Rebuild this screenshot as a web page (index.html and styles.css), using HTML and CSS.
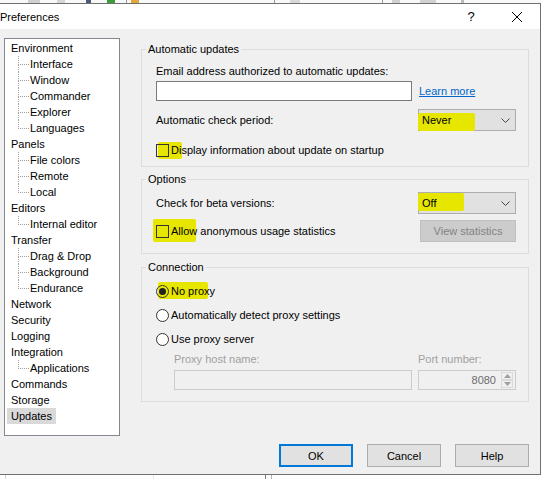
FILE: index.html
```html
<!DOCTYPE html>
<html lang="en">
<head>
    <meta charset="UTF-8">
    <title>Preferences</title>
    <link rel="stylesheet" href="styles.css">
</head>
<body>
<div class="screen">
    <div class="backdrop-top"></div>

    <div class="dialog">
        <div class="titlebar">
            <span class="title">Preferences</span>
            <span class="caption-btn help">?</span>
            <span class="caption-btn">
                <svg width="10" height="10" viewBox="0 0 10 10"><path d="M0 0 L10 10 M10 0 L0 10" stroke="#000" stroke-width="1" fill="none"/></svg>
            </span>
        </div>

        <div class="dialog-body">
            <ul class="tree">
                <li><span class="node">Environment</span>
                    <ul>
                        <li><span class="node">Interface</span></li>
                        <li><span class="node">Window</span></li>
                        <li><span class="node">Commander</span></li>
                        <li><span class="node">Explorer</span></li>
                        <li><span class="node">Languages</span></li>
                    </ul>
                </li>
                <li><span class="node">Panels</span>
                    <ul>
                        <li><span class="node">File colors</span></li>
                        <li><span class="node">Remote</span></li>
                        <li><span class="node">Local</span></li>
                    </ul>
                </li>
                <li><span class="node">Editors</span>
                    <ul>
                        <li><span class="node">Internal editor</span></li>
                    </ul>
                </li>
                <li><span class="node">Transfer</span>
                    <ul>
                        <li><span class="node">Drag &amp; Drop</span></li>
                        <li><span class="node">Background</span></li>
                        <li><span class="node">Endurance</span></li>
                    </ul>
                </li>
                <li><span class="node">Network</span></li>
                <li><span class="node">Security</span></li>
                <li><span class="node">Logging</span></li>
                <li><span class="node">Integration</span>
                    <ul>
                        <li><span class="node">Applications</span></li>
                    </ul>
                </li>
                <li><span class="node">Commands</span></li>
                <li><span class="node">Storage</span></li>
                <li><span class="node selected">Updates</span></li>
            </ul>

            <div class="page">
                <fieldset class="group group-updates">
                    <legend>Automatic updates</legend>
                    <div class="label-line">Email address authorized to automatic updates:</div>
                    <div class="email-row">
                        <input class="textbox email" type="text">
                        <a class="link" href="#">Learn more</a>
                    </div>
                    <div class="spread period-row">
                        <span>Automatic check period:</span>
                        <div class="select hl hl-never">
                            <span>Never</span>
                            <svg width="9" height="5" viewBox="0 0 9 5"><path d="M0.5 0.5 L4.5 4.5 L8.5 0.5" stroke="#444" fill="none"/></svg>
                        </div>
                    </div>
                    <label class="check display-row hl hl-display"><span class="box"></span>Display information about update on startup</label>
                </fieldset>

                <fieldset class="group group-options">
                    <legend>Options</legend>
                    <div class="spread beta-row">
                        <span>Check for beta versions:</span>
                        <div class="select hl hl-off">
                            <span>Off</span>
                            <svg width="9" height="5" viewBox="0 0 9 5"><path d="M0.5 0.5 L4.5 4.5 L8.5 0.5" stroke="#444" fill="none"/></svg>
                        </div>
                    </div>
                    <div class="spread stats-row">
                        <label class="check hl hl-allow"><span class="box"></span>Allow anonymous usage statistics</label>
                        <button class="btn btn-disabled">View statistics</button>
                    </div>
                </fieldset>

                <fieldset class="group group-connection">
                    <legend>Connection</legend>
                    <label class="check radio-row hl hl-noproxy"><span class="radio on"></span>No proxy</label>
                    <label class="check radio-row"><span class="radio"></span>Automatically detect proxy settings</label>
                    <label class="check radio-row"><span class="radio"></span>Use proxy server</label>
                    <div class="proxy">
                        <span class="muted">Proxy host name:</span>
                        <span class="muted">Port number:</span>
                        <div class="textbox disabled"></div>
                        <div class="textbox disabled spin-box">
                            <span>8080</span>
                            <span class="spinner">
                                <span class="spin-btn"><svg width="7" height="4" viewBox="0 0 7 4"><path d="M0 4 L3.5 0 L7 4 Z" fill="#a0a0a0"/></svg></span>
                                <span class="spin-btn"><svg width="7" height="4" viewBox="0 0 7 4"><path d="M0 0 L3.5 4 L7 0 Z" fill="#a0a0a0"/></svg></span>
                            </span>
                        </div>
                    </div>
                </fieldset>
            </div>
        </div>

        <div class="footer">
            <button class="btn btn-default">OK</button>
            <button class="btn">Cancel</button>
            <button class="btn">Help</button>
        </div>
    </div>

    <div class="backdrop-bottom"></div>
</div>
</body>
</html>
```

FILE: styles.css
```css
body {
    margin: 0;
    font-family: "Liberation Sans", Arial, sans-serif;
    font-size: 11px;
    color: #000;
    background: #fff;
}
.screen {
    width: 542px;
    height: 479px;
    overflow: hidden;
    display: flex;
    flex-direction: column;
    background: #fff;
}

/* bits of the window behind the dialog */
.backdrop-top {
    height: 3px;
    flex: none;
    background: linear-gradient(to right,
        #f8f8f8 28px, #d0d0d0 28px 40px, #f8f8f8 40px 57px, #d6d6d6 57px 65px,
        #f8f8f8 65px 86px, #4a5a78 86px 91px, #f8f8f8 91px 107px, #3d9b3d 107px 115px,
        #f8f8f8 115px 126px, #9a9a9a 126px 127px, #f8f8f8 127px 131px, #e2a73a 131px 139px,
        #f8f8f8 139px 274px, #9a9a9a 274px 275px, #f8f8f8 275px 290px, #d8d8d8 290px 300px,
        #f8f8f8 300px 382px, #9a9a9a 382px 383px, #f8f8f8 383px 392px, #d0d0d0 392px 400px,
        #f8f8f8 400px 420px, #d2d2d2 420px 436px, #f8f8f8 436px 461px, #bbbbbb 461px 464px,
        #f8f8f8 464px);
}
.backdrop-bottom {
    height: 4px;
    flex: none;
    background: linear-gradient(to right,
        #fff 5px, #d4d4d4 5px 6px, #fff 6px 153px, #e4e4e4 153px 154px,
        #fff 154px 265px, #7a7a7a 265px 266px, #fff 266px 271px, #b4b4b4 271px 272px,
        #fff 272px);
}

.dialog {
    width: 541px;
    height: 472px;
    box-sizing: border-box;
    border: 1px solid #707070;
    border-left: none;
    background: #f0f0f0;
    display: flex;
    flex-direction: column;
    flex: none;
}
.titlebar {
    height: 25px;
    flex: none;
    background: #fff;
    display: flex;
    align-items: center;
}
.title {
    font-size: 11px;
}
.caption-btn {
    width: 46px;
    height: 25px;
    display: flex;
    align-items: center;
    justify-content: center;
}
.caption-btn.help {
    margin-left: auto;
    font-size: 13px;
}

.dialog-body {
    display: flex;
    padding: 9px 0 0 4px;
    flex: none;
}

/* navigation tree */
.tree {
    width: 116px;
    height: 398px;
    box-sizing: border-box;
    margin: 0;
    padding: 1px 0 0 0;
    list-style: none;
    background: #fff;
    border: 1px solid #828790;
}
.tree ul {
    list-style: none;
    margin: 0;
    padding: 0;
}
.tree li {
    line-height: 16px;
}
.node {
    display: inline-block;
    height: 16px;
    margin-left: 2px;
    padding: 0 4px;
}
.node.selected {
    background: #d9d9d9;
}
.tree ul li {
    position: relative;
    padding-left: 19px;
}
.tree ul li::before {
    content: "";
    position: absolute;
    left: 13px;
    top: 0;
    width: 11px;
    height: 9px;
    box-sizing: border-box;
    border-left: 1px dotted #a0a0a0;
    border-bottom: 1px dotted #a0a0a0;
}
.tree ul li:not(:last-child)::after {
    content: "";
    position: absolute;
    left: 13px;
    top: 9px;
    bottom: 0;
    border-left: 1px dotted #a0a0a0;
}

/* settings page */
.page {
    width: 388px;
    margin-left: 21px;
    padding-top: 4px;
    display: flex;
    flex-direction: column;
}
.group {
    margin: 0;
    padding: 0 12px 0 14px;
    border: 1px solid #dcdcdc;
    min-width: 0;
}
.group legend {
    margin-left: -10px;
    padding: 0 2px;
    line-height: 14px;
}
.group-updates {
    padding-bottom: 9px;
}
.group-options {
    margin-top: 5px;
    padding-bottom: 11px;
}
.group-connection {
    margin-top: 6px;
    padding-bottom: 11px;
}

.label-line {
    margin-top: 8px;
    line-height: 14px;
}
.email-row {
    display: flex;
    align-items: center;
    gap: 7px;
    margin-top: 3px;
}
.textbox {
    height: 20px;
    box-sizing: border-box;
    margin: 0;
    padding: 0;
    border: 1px solid #7a7a7a;
    background: #fff;
}
.textbox.email {
    width: 256px;
}
.textbox.disabled {
    border-color: #cccccc;
    background: #f0f0f0;
}
.link {
    color: #0066cc;
    text-decoration: underline;
}
.spread {
    display: flex;
    justify-content: space-between;
    align-items: center;
}
.period-row {
    margin-top: 8px;
}
.beta-row {
    margin-top: 6px;
}
.stats-row {
    margin-top: 6px;
}

.select {
    width: 98px;
    height: 22px;
    box-sizing: border-box;
    padding: 0 5px 0 3px;
    border: 1px solid #adadad;
    background: #e1e1e1;
    display: flex;
    align-items: center;
    justify-content: space-between;
}

.check {
    display: flex;
    align-items: center;
    gap: 2px;
    height: 14px;
    line-height: 14px;
}
.display-row {
    margin-top: 12px;
}
.radio-row {
    margin-top: 10px;
}
.box {
    width: 13px;
    height: 13px;
    box-sizing: border-box;
    border: 1px solid #333;
    flex: none;
}
.radio {
    width: 13px;
    height: 13px;
    box-sizing: border-box;
    border: 1px solid #333;
    border-radius: 50%;
    background: #fff;
    flex: none;
    display: flex;
    align-items: center;
    justify-content: center;
}
.radio.on::after {
    content: "";
    width: 7px;
    height: 7px;
    border-radius: 50%;
    background: #222;
}

/* yellow marker strokes drawn over the screenshot */
.hl {
    position: relative;
    z-index: 0;
}
.hl::before {
    content: "";
    position: absolute;
    z-index: -1;
    background: #e6e600;
    border-radius: 2px;
}
.hl .radio {
    background: transparent;
}
.hl-display::before {
    left: 2px;
    top: -1px;
    width: 24px;
    height: 17px;
}
.hl-allow::before {
    left: -3px;
    top: -5px;
    width: 43px;
    height: 23px;
}
.hl-noproxy::before {
    left: 2px;
    top: -2px;
    width: 50px;
    height: 17px;
}
.hl-never::before {
    left: -1px;
    top: 3px;
    width: 57px;
    height: 18px;
}
.hl-off::before {
    left: -1px;
    top: 0;
    width: 46px;
    height: 18px;
}

.proxy {
    display: grid;
    grid-template-columns: 238px 98px;
    column-gap: 6px;
    row-gap: 4px;
    margin-left: 18px;
    margin-top: 6px;
    line-height: 14px;
}
.muted {
    color: #a0a0a0;
}
.spin-box {
    display: flex;
    align-items: center;
    justify-content: flex-end;
    padding-right: 2px;
    color: #6d6d6d;
}
.spinner {
    display: flex;
    flex-direction: column;
    margin-left: 5px;
}
.spin-btn {
    width: 12px;
    height: 8px;
    box-sizing: border-box;
    border: 1px solid #dadada;
    display: flex;
    align-items: center;
    justify-content: center;
}

.btn {
    width: 74px;
    height: 23px;
    box-sizing: border-box;
    margin: 0;
    padding: 0;
    border: 1px solid #adadad;
    background: #e1e1e1;
    font-family: inherit;
    font-size: 11px;
    color: #000;
}
.btn-default {
    border: 2px solid #0078d7;
}
.btn-disabled {
    width: 96px;
    height: 22px;
    border-color: #bfbfbf;
    background: #cccccc;
    color: #838383;
}

.footer {
    display: flex;
    justify-content: flex-end;
    gap: 14px;
    margin-top: 8px;
    padding-right: 11px;
}
```
